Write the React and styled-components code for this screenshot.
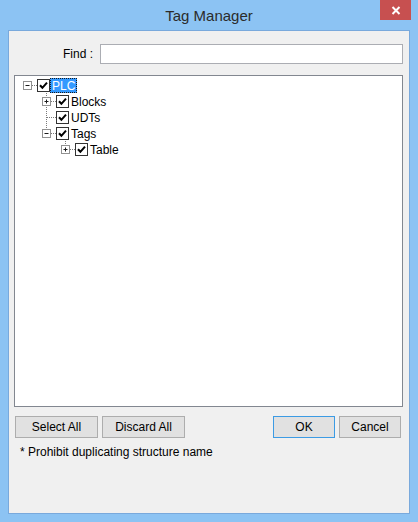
import React from 'react'
import styled, { createGlobalStyle } from 'styled-components'

const GlobalStyle = createGlobalStyle`
  html, body { margin: 0; padding: 0; background: #8cc3f3; }
  body { font-family: 'Liberation Sans', Arial, sans-serif; }
`

const Window = styled.div`
  width: 418px;
  height: 522px;
  background: #8cc3f3;
  display: flex;
  flex-direction: column;
  padding: 0 8px 8px 8px;
  box-sizing: border-box;
`

const TitleBar = styled.div`
  height: 30px;
  display: flex;
  align-items: center;
  justify-content: center;
  position: relative;
  font-size: 15px;
  color: #2b2b2b;
`

const CloseButton = styled.div`
  position: absolute;
  top: 0;
  right: -1px;
  width: 31px;
  height: 20px;
  background: #c75050;
  color: #fff;
  display: flex;
  align-items: center;
  justify-content: center;
`

const Client = styled.div`
  flex: 1;
  background: #f0f0f0;
  border: 1px solid #79a9dc;
  display: flex;
  flex-direction: column;
  padding: 13px 6px 0 5px;
`

const FindRow = styled.div`
  display: flex;
  align-items: center;
  justify-content: flex-end;
  gap: 7px;
  font-size: 12px;
  color: #000;
`

const FindInput = styled.input`
  width: 303px;
  height: 20px;
  box-sizing: border-box;
  border: 1px solid #abadb3;
  background: #fff;
  outline: none;
  margin: 0;
`

const TreeBox = styled.div`
  margin-top: 11px;
  height: 332px;
  box-sizing: border-box;
  background: #fff;
  border: 1px solid #828790;
  padding: 1px 0 0 3px;
  font-size: 12px;
`

const Row = styled.div`
  height: 16px;
  display: flex;
  align-items: center;
`

const Guide = styled.svg`
  width: 19px;
  height: 16px;
  flex: none;
  display: block;
`

const Check = styled.span`
  width: 13px;
  height: 13px;
  box-sizing: border-box;
  border: 1px solid #333;
  background: #fff;
  flex: none;
  display: flex;
  align-items: center;
  justify-content: center;
`

const Label = styled.span`
  height: 15px;
  line-height: 14px;
  padding: 0 1px;
  box-sizing: border-box;
  color: ${p => (p.$selected ? '#fff' : '#000')};
  background: ${p => (p.$selected ? '#3399ff' : 'transparent')};
  border: 1px ${p => (p.$selected ? 'dotted #1a1a1a' : 'solid transparent')};
`

const ButtonRow = styled.div`
  margin-top: 9px;
  display: flex;
  align-items: center;
  gap: 4px;
  padding: 0 2px 0 1px;
`

const Btn = styled.button`
  width: ${p => p.$w}px;
  height: 22px;
  margin: 0;
  padding: 0;
  font-family: 'Liberation Sans', Arial, sans-serif;
  font-size: 12px;
  color: #000;
  background: #e1e1e1;
  border: 1px solid ${p => (p.$default ? '#3c9be4' : '#adadad')};
`

const Spacer = styled.div`
  flex: 1;
`

const Note = styled.div`
  margin: 7px 0 0 6px;
  font-size: 12px;
  color: #000;
`

const dot = '#7a7a7a'

const Dotted = ({ x1, y1, x2, y2 }) => (
  <line x1={x1} y1={y1} x2={x2} y2={y2} stroke={dot} strokeWidth="1" strokeDasharray="1 1" shapeRendering="crispEdges" />
)

// kind: 'pass' | 'tee' | 'elbow' | 'root' | 'blank'
const GuideCell = ({ kind, expander }) => (
  <Guide viewBox="0 0 19 16">
    {kind === 'pass' && <Dotted x1={9.5} y1={0} x2={9.5} y2={16} />}
    {kind === 'tee' && (
      <>
        <Dotted x1={9.5} y1={0} x2={9.5} y2={16} />
        <Dotted x1={9.5} y1={8.5} x2={19} y2={8.5} />
      </>
    )}
    {kind === 'elbow' && (
      <>
        <Dotted x1={9.5} y1={0} x2={9.5} y2={8.5} />
        <Dotted x1={9.5} y1={8.5} x2={19} y2={8.5} />
      </>
    )}
    {kind === 'root' && <Dotted x1={9.5} y1={8.5} x2={19} y2={8.5} />}
    {expander && (
      <>
        <rect x="5.5" y="4.5" width="8" height="8" fill="#fff" stroke="#919191" />
        <line x1="7.5" y1="8.5" x2="11.5" y2="8.5" stroke="#1c1c1c" />
        {expander === 'plus' && <line x1="9.5" y1="6.5" x2="9.5" y2="10.5" stroke="#1c1c1c" />}
      </>
    )}
  </Guide>
)

const CheckMark = () => (
  <svg width="9" height="9" viewBox="0 0 9 9">
    <path d="M1 4.2 L3.4 6.8 L8 1.6" fill="none" stroke="#000" strokeWidth="2" />
  </svg>
)

const rows = [
  { label: 'PLC', guides: [], kind: 'root', expander: 'minus', selected: true },
  { label: 'Blocks', guides: ['blank'], kind: 'tee', expander: 'plus' },
  { label: 'UDTs', guides: ['blank'], kind: 'tee' },
  { label: 'Tags', guides: ['blank'], kind: 'elbow', expander: 'minus' },
  { label: 'Table', guides: ['blank', 'blank'], kind: 'elbow', expander: 'plus' },
]

const TreeRow = ({ row }) => (
  <Row>
    {row.guides.map((g, i) => (
      <GuideCell key={i} kind={g} />
    ))}
    <GuideCell kind={row.kind} expander={row.expander} />
    <Check>
      <CheckMark />
    </Check>
    <Label $selected={row.selected}>{row.label}</Label>
  </Row>
)

const App = () => (
  <>
    <GlobalStyle />
    <Window>
      <TitleBar>
        Tag Manager
        <CloseButton>
          <svg width="10" height="9" viewBox="0 0 10 9">
            <path d="M1.5 1 L8.5 8 M8.5 1 L1.5 8" stroke="#fff" strokeWidth="2" />
          </svg>
        </CloseButton>
      </TitleBar>
      <Client>
        <FindRow>
          <span>Find :</span>
          <FindInput />
        </FindRow>
        <TreeBox>
          {rows.map(r => (
            <TreeRow key={r.label} row={r} />
          ))}
        </TreeBox>
        <ButtonRow>
          <Btn $w={83}>Select All</Btn>
          <Btn $w={83}>Discard All</Btn>
          <Spacer />
          <Btn $w={62} $default>OK</Btn>
          <Btn $w={62}>Cancel</Btn>
        </ButtonRow>
        <Note>* Prohibit duplicating structure name</Note>
      </Client>
    </Window>
  </>
)

export default App
